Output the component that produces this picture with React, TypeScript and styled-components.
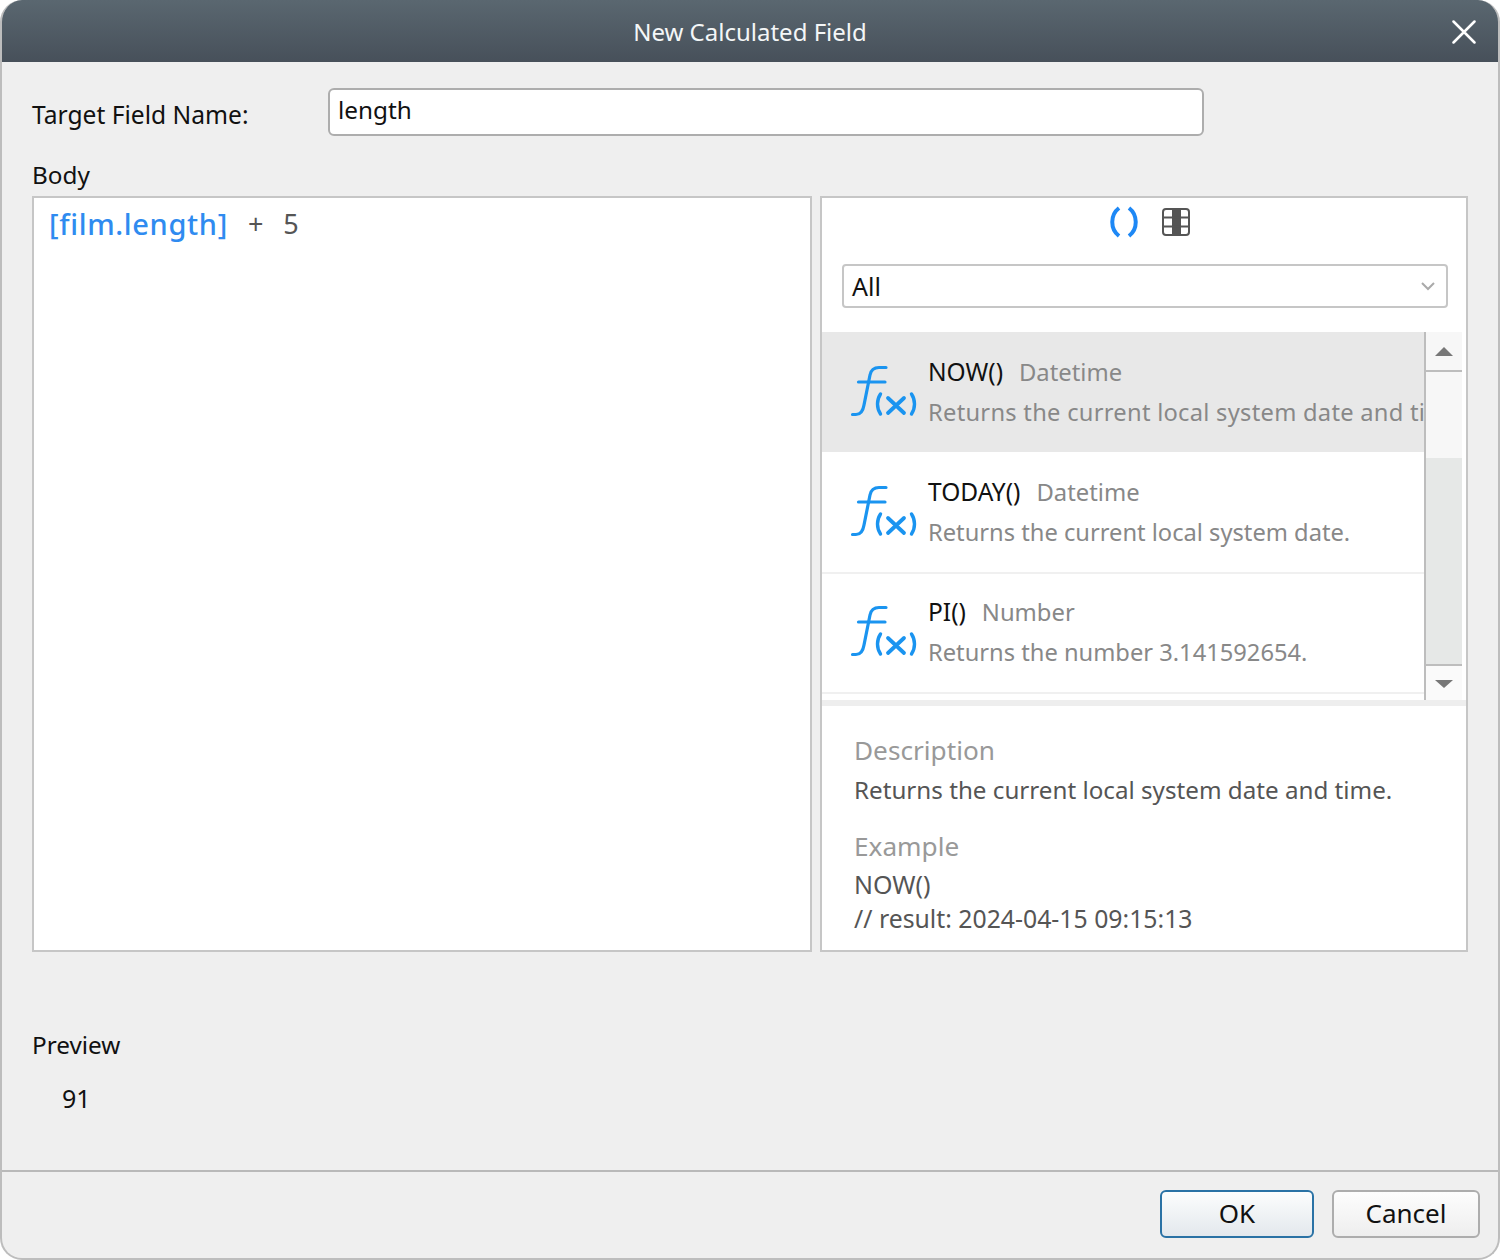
import styled, { createGlobalStyle } from 'styled-components'

const functions = [
	{ name: 'NOW()', type: 'Datetime', desc: 'Returns the current local system date and time.', active: true },
	{ name: 'TODAY()', type: 'Datetime', desc: 'Returns the current local system date.' },
	{ name: 'PI()', type: 'Number', desc: 'Returns the number 3.141592654.' },
]

function FxIcon() {
	return (
		<FxSvg viewBox="0 0 68 54" fill="none" stroke="#1a94f0" strokeLinecap="round">
			<path strokeWidth="3.2" d="M2.5 50.5H6C11 50.5 13 47 14 41L20 11C21 6 24 3.5 29 3.5H36" />
			<path strokeWidth="3.2" d="M8.5 18H35" />
			<path strokeWidth="3.4" d="M30.5 30C26.5 36 26.5 44 30.5 50" />
			<path strokeWidth="3.8" d="M38 34L54 49M54 34L38 49" />
			<path strokeWidth="3.4" d="M61.5 30C65.5 36 65.5 44 61.5 50" />
		</FxSvg>
	)
}

export default function App() {
	return (
		<>
			<GlobalStyle />
			<Window>
				<TitleBar>
					New Calculated Field
					<CloseButton viewBox="0 0 24 24" fill="none" stroke="#fff" strokeWidth="2.5" strokeLinecap="round">
						<path d="M1.5 1.5L22.5 22.5M22.5 1.5L1.5 22.5" />
					</CloseButton>
				</TitleBar>
				<Content>
					<NameRow>
						<NameLabel>Target Field Name:</NameLabel>
						<NameInput>length</NameInput>
					</NameRow>
					<BodyLabel>Body</BodyLabel>
					<Panels>
						<Editor>
							<FieldToken>[film.length]</FieldToken>
							<Operator>+</Operator>
							<Operand>5</Operand>
						</Editor>
						<SidePanel>
							<IconBar>
								<svg width="30" height="32" viewBox="0 0 30 32" fill="none" stroke="#1e88f5" strokeWidth="4">
									<path d="M10 2C1 9 1 23 10 30M20 2C29 9 29 23 20 30" />
								</svg>
								<TableIcon width="28" height="28" viewBox="0 0 28 28" fill="none" stroke="#555">
									<rect x="1" y="1" width="26" height="26" rx="3" strokeWidth="2" />
									<rect x="10" y="1" width="9" height="26" fill="#555" strokeWidth="0" />
									<path strokeWidth="2" d="M1 9.5H27M1 18.5H27" />
								</TableIcon>
							</IconBar>
							<SelectBox>
								All
								<svg width="16" height="10" viewBox="0 0 16 10" fill="none" stroke="#aaa" strokeWidth="2">
									<path d="M2 2L8 8L14 2" />
								</svg>
							</SelectBox>
							<ListArea>
								<FunctionList>
									{functions.map((f) => (
										<FunctionRow key={f.name} $active={f.active}>
											<FxIcon />
											<FunctionText>
												<FunctionHead>
													<FunctionName>{f.name}</FunctionName>
													<FunctionType>{f.type}</FunctionType>
												</FunctionHead>
												<FunctionDesc $active={f.active}>{f.desc}</FunctionDesc>
											</FunctionText>
										</FunctionRow>
									))}
								</FunctionList>
								<ScrollBar>
									<ScrollUp>
										<svg width="18" height="10" viewBox="0 0 18 10" fill="#777">
											<path d="M9 0L18 9H0Z" />
										</svg>
									</ScrollUp>
									<ScrollThumb />
									<ScrollTrack />
									<ScrollDown>
										<svg width="18" height="10" viewBox="0 0 18 10" fill="#777">
											<path d="M0 1H18L9 9Z" />
										</svg>
									</ScrollDown>
								</ScrollBar>
							</ListArea>
							<Details>
								<DetailTitle>Description</DetailTitle>
								<DetailLine>Returns the current local system date and time.</DetailLine>
								<ExampleTitle>Example</ExampleTitle>
								<ExampleLine>NOW()</ExampleLine>
								<ResultLine>// result: 2024-04-15 09:15:13</ResultLine>
							</Details>
						</SidePanel>
					</Panels>
					<PreviewLabel>Preview</PreviewLabel>
					<PreviewValue>91</PreviewValue>
				</Content>
				<Footer>
					<PrimaryButton>OK</PrimaryButton>
					<CancelButton>Cancel</CancelButton>
				</Footer>
			</Window>
		</>
	)
}

const GlobalStyle = createGlobalStyle`
	html, body {
		margin: 0;
		padding: 0;
		background: #fff;
	}

	* {
		box-sizing: border-box;
	}
`

const Window = styled.div`
	width: 1500px;
	height: 1260px;
	display: flex;
	flex-direction: column;
	background: #efefef;
	border-radius: 22px;
	overflow: hidden;
	border: 2px solid #bdbdbd;
	border-top: none;
	font-family: 'Noto Sans', 'Open Sans', sans-serif;
	font-size: 25px;
	color: #111;
`

const TitleBar = styled.div`
	position: relative;
	height: 62px;
	margin: 0 -2px;
	flex-shrink: 0;
	display: flex;
	align-items: center;
	justify-content: center;
	background: linear-gradient(#5a6770, #47505a);
	color: #f4f6f7;
	font-size: 24px;
`

const CloseButton = styled.svg`
	position: absolute;
	right: 24px;
	top: 20px;
	width: 24px;
	height: 24px;
`

const Content = styled.div`
	flex: 1;
	padding: 26px 30px 0;
`

const NameRow = styled.div`
	display: flex;
	align-items: flex-start;
`

const NameLabel = styled.div`
	width: 296px;
	padding-top: 9px;
	line-height: 36px;
	font-size: 24.6px;
`

const NameInput = styled.div`
	width: 876px;
	height: 48px;
	padding: 0 8px;
	line-height: 40px;
	font-size: 24.3px;
	background: #fff;
	border: 2px solid #adadad;
	border-radius: 6px;
`

const BodyLabel = styled.div`
	margin-top: 19px;
	height: 41px;
	line-height: 40px;
	font-size: 24.3px;
`

const Panels = styled.div`
	display: flex;
	gap: 8px;
	height: 756px;
`

const Editor = styled.div`
	width: 780px;
	background: #fff;
	border: 2px solid #c6c6c6;
	padding: 4px 15px;
	display: flex;
	align-items: flex-start;
	line-height: 44px;
`

const FieldToken = styled.span`
	color: #2f8bf0;
	font-size: 29px;
	font-weight: 500;
	letter-spacing: 0.65px;
`

const Operator = styled.span`
	color: #555;
	margin-left: 20px;
	font-size: 27px;
`

const Operand = styled.span`
	color: #555;
	margin-left: 20px;
	font-size: 27px;
`

const SidePanel = styled.div`
	width: 648px;
	background: #fff;
	border: 2px solid #c6c6c6;
	display: flex;
	flex-direction: column;
`

const IconBar = styled.div`
	height: 66px;
	padding: 8px 0 0 10px;
	display: flex;
	justify-content: center;
	align-items: flex-start;
	gap: 23px;
`

const TableIcon = styled.svg`
	margin-top: 2px;
`

const SelectBox = styled.div`
	margin-left: 20px;
	width: 606px;
	height: 44px;
	padding: 0 10px 0 8px;
	display: flex;
	align-items: center;
	justify-content: space-between;
	border: 2px solid #c6c6c6;
	border-radius: 4px;
`

const ListArea = styled.div`
	margin-top: 24px;
	height: 368px;
	display: flex;
	overflow: hidden;
`

const FunctionList = styled.div`
	width: 602px;
	overflow: hidden;
`

const FunctionRow = styled.div<{ $active?: boolean }>`
	position: relative;
	height: 120px;
	padding: 20px 0 0 28px;
	display: flex;
	align-items: flex-start;
	gap: 10px;
	white-space: nowrap;
	background: ${({ $active }) => ($active ? '#e8e8e8' : '#fff')};

	&::after {
		content: '';
		position: absolute;
		left: 0;
		right: 0;
		bottom: -2px;
		height: 2px;
		z-index: 1;
		background: ${({ $active }) => ($active ? '#fff' : '#f0f0f0')};
	}
`

const FxSvg = styled.svg`
	width: 68px;
	height: 54px;
	margin-top: 12px;
	flex-shrink: 0;
`

const FunctionText = styled.div`
	min-width: 0;
`

const FunctionHead = styled.div`
	display: flex;
	align-items: baseline;
	gap: 16px;
	line-height: 40px;
`

const FunctionName = styled.span`
	color: #111;
	font-size: 24.5px;
`

const FunctionType = styled.span`
	color: #888;
	font-size: 23.8px;
`

const FunctionDesc = styled.div<{ $active?: boolean }>`
	color: #888;
	font-size: 23.7px;
	line-height: 40px;
	letter-spacing: ${({ $active }) => ($active ? '0.27px' : '0')};
`

const ScrollBar = styled.div`
	width: 38px;
	display: flex;
	flex-direction: column;
	border-left: 2px solid #bdbdbd;
	background: #f7f7f7;
`

const ScrollUp = styled.div`
	height: 40px;
	display: flex;
	align-items: center;
	justify-content: center;
	padding-top: 1px;
	border-bottom: 2px solid #bdbdbd;
`

const ScrollThumb = styled.div`
	height: 86px;
`

const ScrollTrack = styled.div`
	flex: 1;
	background: #e6e8e7;
`

const ScrollDown = styled.div`
	height: 36px;
	display: flex;
	align-items: center;
	justify-content: center;
	padding-top: 2px;
	background: #fafafa;
	border-top: 2px solid #bdbdbd;
`

const Details = styled.div`
	flex: 1;
	padding: 24px 0 0 32px;
	border-top: 6px solid #eeeeee;
	color: #555;
	white-space: nowrap;
`

const DetailTitle = styled.div`
	color: #999;
	font-size: 26.2px;
	line-height: 40px;
`

const DetailLine = styled.div`
	font-size: 24.2px;
	line-height: 40px;
`

const ExampleTitle = styled(DetailTitle)`
	margin-top: 16px;
`

const ExampleLine = styled.div`
	line-height: 36px;
`

const ResultLine = styled.div`
	font-size: 24.8px;
	line-height: 32px;
`

const PreviewLabel = styled.div`
	margin-top: 73px;
	line-height: 40px;
	font-size: 24.3px;
`

const PreviewValue = styled.div`
	margin-top: 13px;
	padding-left: 30px;
	line-height: 40px;
`

const Footer = styled.div`
	height: 88px;
	flex-shrink: 0;
	margin: 0 -2px;
	padding: 18px 20px 0 0;
	display: flex;
	justify-content: flex-end;
	gap: 18px;
	border-top: 2px solid #b9b9b9;
	font-size: 26px;
`

const PrimaryButton = styled.div`
	width: 154px;
	height: 48px;
	padding-bottom: 2px;
	display: flex;
	align-items: center;
	justify-content: center;
	border: 2px solid #2a72a5;
	border-radius: 6px;
	background: linear-gradient(#fcfdfd, #e3e8ed);
`

const CancelButton = styled(PrimaryButton)`
	width: 148px;
	border-color: #adadad;
	background: linear-gradient(#fdfdfd, #eeeeee);
`
